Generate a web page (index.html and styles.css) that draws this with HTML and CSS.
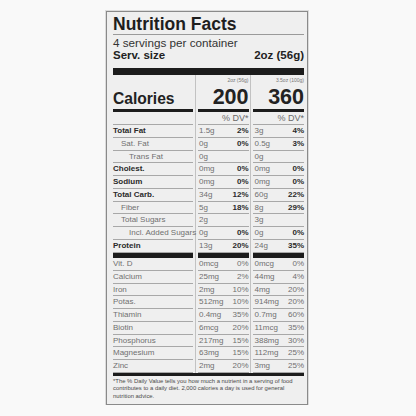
FILE: index.html
```html
<!DOCTYPE html>
<html>
<head>
    <title>Nutrition Facts</title>
    <link rel="stylesheet" href="styles.css">
</head>
<body>
    <div class="label">
        <h1 class="title">Nutrition Facts</h1>
        <p class="servings">4 servings per container</p>
        <div class="serv-size"><span>Serv. size</span><span>2oz (56g)</span></div>
        <div class="top-bar"></div>

        <div class="table">
            <div class="cal-row">
                <div class="cal-cell name">Calories</div>
                <div class="cal-cell"><span class="serv-note">2oz (56g)</span><span class="cal-num">200</span></div>
                <div class="cal-cell"><span class="serv-note">3.5oz (100g)</span><span class="cal-num">360</span></div>
            </div>
            <div class="dv-row">
                <div></div>
                <div>% DV*</div>
                <div>% DV*</div>
            </div>

            <div class="row">
                <div class="name bold">Total Fat</div>
                <div class="val"><span>1.5g</span><b>2%</b></div>
                <div class="val"><span>3g</span><b>4%</b></div>
            </div>
            <div class="row">
                <div class="name sub">Sat. Fat</div>
                <div class="val"><span>0g</span><b>0%</b></div>
                <div class="val"><span>0.5g</span><b>3%</b></div>
            </div>
            <div class="row">
                <div class="name sub2">Trans Fat</div>
                <div class="val"><span>0g</span></div>
                <div class="val"><span>0g</span></div>
            </div>
            <div class="row">
                <div class="name bold">Cholest.</div>
                <div class="val"><span>0mg</span><b>0%</b></div>
                <div class="val"><span>0mg</span><b>0%</b></div>
            </div>
            <div class="row">
                <div class="name bold">Sodium</div>
                <div class="val"><span>0mg</span><b>0%</b></div>
                <div class="val"><span>0mg</span><b>0%</b></div>
            </div>
            <div class="row">
                <div class="name bold">Total Carb.</div>
                <div class="val"><span>34g</span><b>12%</b></div>
                <div class="val"><span>60g</span><b>22%</b></div>
            </div>
            <div class="row">
                <div class="name sub">Fiber</div>
                <div class="val"><span>5g</span><b>18%</b></div>
                <div class="val"><span>8g</span><b>29%</b></div>
            </div>
            <div class="row">
                <div class="name sub">Total Sugars</div>
                <div class="val"><span>2g</span></div>
                <div class="val"><span>3g</span></div>
            </div>
            <div class="row">
                <div class="name sub2">Incl. Added Sugars</div>
                <div class="val"><span>0g</span><b>0%</b></div>
                <div class="val"><span>0g</span><b>0%</b></div>
            </div>
            <div class="row">
                <div class="name bold">Protein</div>
                <div class="val"><span>13g</span><b>20%</b></div>
                <div class="val"><span>24g</span><b>35%</b></div>
            </div>

            <div class="bar-row">
                <div></div><div></div><div></div>
            </div>

            <div class="row">
                <div class="name">Vit. D</div>
                <div class="val"><span>0mcg</span><span>0%</span></div>
                <div class="val"><span>0mcg</span><span>0%</span></div>
            </div>
            <div class="row">
                <div class="name">Calcium</div>
                <div class="val"><span>25mg</span><span>2%</span></div>
                <div class="val"><span>44mg</span><span>4%</span></div>
            </div>
            <div class="row">
                <div class="name">Iron</div>
                <div class="val"><span>2mg</span><span>10%</span></div>
                <div class="val"><span>4mg</span><span>20%</span></div>
            </div>
            <div class="row">
                <div class="name">Potas.</div>
                <div class="val"><span>512mg</span><span>10%</span></div>
                <div class="val"><span>914mg</span><span>20%</span></div>
            </div>
            <div class="row">
                <div class="name">Thiamin</div>
                <div class="val"><span>0.4mg</span><span>35%</span></div>
                <div class="val"><span>0.7mg</span><span>60%</span></div>
            </div>
            <div class="row">
                <div class="name">Biotin</div>
                <div class="val"><span>6mcg</span><span>20%</span></div>
                <div class="val"><span>11mcg</span><span>35%</span></div>
            </div>
            <div class="row">
                <div class="name">Phosphorus</div>
                <div class="val"><span>217mg</span><span>15%</span></div>
                <div class="val"><span>388mg</span><span>30%</span></div>
            </div>
            <div class="row">
                <div class="name">Magnesium</div>
                <div class="val"><span>63mg</span><span>15%</span></div>
                <div class="val"><span>112mg</span><span>25%</span></div>
            </div>
            <div class="row">
                <div class="name">Zinc</div>
                <div class="val"><span>2mg</span><span>20%</span></div>
                <div class="val"><span>3mg</span><span>25%</span></div>
            </div>
        </div>

        <div class="bottom-bar"></div>
        <p class="foot">*The % Daily Value tells you how much a nutrient in a serving of food contributes to a daily diet. 2,000 calories a day is used for general nutrition advice.</p>
    </div>
</body>
</html>
```

FILE: styles.css
```css
body {
    margin: 0;
    background-color: #f9f9f9;
    font-family: 'Liberation Sans', Arial, sans-serif;
    color: #333;
}
.label {
    width: 202px;
    box-sizing: border-box;
    margin: 11px 0 0 106px;
    padding: 0 3px 3.5px 6px;
    background-color: #efefef;
    border: 1px solid #8a8a8a;
    box-shadow: 0 0 0 1px #dcdcdc;
}
.title {
    margin: 0;
    padding-top: 2px;
    font-size: 17.5px;
    line-height: 20px;
    font-weight: bold;
    color: #1e1e1e;
    border-bottom: 1px solid #9a9a9a;
}
.servings {
    margin: 1px 0 0;
    font-size: 11.7px;
    line-height: 13px;
    color: #333;
}
.serv-size {
    display: flex;
    justify-content: space-between;
    font-size: 11.5px;
    line-height: 13px;
    font-weight: bold;
    color: #222;
}
.top-bar {
    height: 7px;
    margin-top: 6px;
    background-color: #1c1c1c;
}
.table {
    background: linear-gradient(to right,
        transparent 82px, #c2c2c2 82px, #c2c2c2 83px, transparent 83px,
        transparent 137px, #c2c2c2 137px, #c2c2c2 138px, transparent 138px);
}
.cal-row, .dv-row, .row, .bar-row {
    display: grid;
    grid-template-columns: 80px 51px 51px;
    column-gap: 4.5px;
}
.cal-cell {
    height: 37px;
    box-sizing: border-box;
    padding: 2px 0 1.5px;
    border-bottom: 3px solid #1c1c1c;
    display: flex;
    flex-direction: column;
    justify-content: space-between;
    align-items: flex-end;
}
.cal-cell.name {
    justify-content: flex-end;
    align-items: flex-start;
    padding-bottom: 1px;
    font-size: 15.6px;
    line-height: 18px;
    font-weight: bold;
    color: #222;
}
.serv-note {
    font-size: 5px;
    line-height: 6px;
    color: #777;
}
.cal-num {
    font-size: 21.5px;
    line-height: 22px;
    font-weight: bold;
    color: #222;
}
.dv-row div {
    height: 13px;
    box-sizing: border-box;
    border-bottom: 1px solid #a8a8a8;
    font-size: 9px;
    line-height: 12px;
    text-align: right;
    color: #6a6a6a;
}
.row div {
    height: 12.75px;
    box-sizing: border-box;
    border-bottom: 1px solid #a8a8a8;
    font-size: 8px;
    line-height: 11.75px;
    color: #707070;
    white-space: nowrap;
}
.row .name.bold {
    font-weight: bold;
    color: #2a2a2a;
}
.row .sub {
    padding-left: 8px;
}
.row .sub2 {
    padding-left: 16px;
}
.row .val {
    display: flex;
    justify-content: space-between;
    padding-left: 1.5px;
}
.row .val b {
    color: #2a2a2a;
}
.bar-row div {
    height: 5.5px;
    background-color: #1c1c1c;
}
.bottom-bar {
    height: 3px;
    background-color: #1c1c1c;
}
.foot {
    margin: 0;
    padding-top: 2px;
    font-size: 5.9px;
    line-height: 7.5px;
    color: #4a4a4a;
}
```
